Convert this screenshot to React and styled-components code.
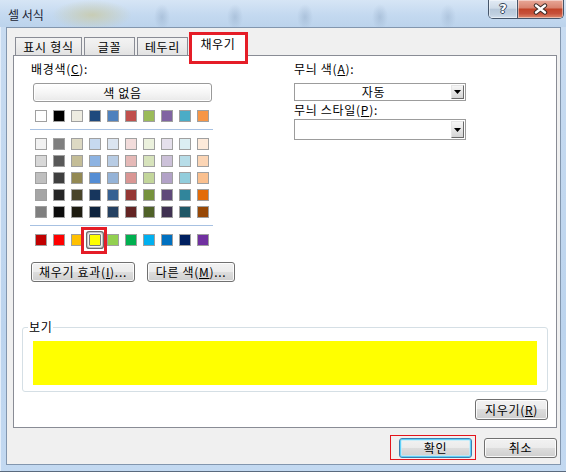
import styled, { createGlobalStyle } from "styled-components";

const UI_FONT = `"Noto Sans CJK KR", "Noto Sans", sans-serif`;

const GlobalStyle = createGlobalStyle`
  html, body { margin: 0; padding: 0; background: #ffffff; }
  body {
    font-family: ${UI_FONT};
    font-size: 12px;
    color: #000;
  }
  *, *::before, *::after { box-sizing: border-box; }
  u { text-underline-offset: 1px; }
`;

const THEME = ["#FFFFFF", "#000000", "#EEECE1", "#1F497D", "#4F81BD", "#C0504D", "#9BBB59", "#8064A2", "#4BACC6", "#F79646"];

const TINTS = [
  ["#F2F2F2", "#7F7F7F", "#DDD9C3", "#C6D9F0", "#DBE5F1", "#F2DCDB", "#EBF1DD", "#E5E0EC", "#DBEEF3", "#FDEADA"],
  ["#D8D8D8", "#595959", "#C4BD97", "#8DB3E2", "#B8CCE4", "#E5B9B7", "#D7E3BC", "#CCC1D9", "#B7DDE8", "#FBD5B5"],
  ["#BFBFBF", "#3F3F3F", "#938953", "#548DD4", "#95B3D7", "#D99694", "#C3D69B", "#B2A2C7", "#92CDDC", "#FAC08F"],
  ["#A5A5A5", "#262626", "#494429", "#17365D", "#366092", "#953734", "#76923C", "#5F497A", "#31859B", "#E36C09"],
  ["#7F7F7F", "#0C0C0C", "#1D1B10", "#0F243E", "#244061", "#632423", "#4F6128", "#3F3151", "#205867", "#974806"],
];

const STANDARD = ["#C00000", "#FF0000", "#FFC000", "#FFFF00", "#92D050", "#00B050", "#00B0F0", "#0070C0", "#002060", "#7030A0"];

const Window = styled.div`
  width: 566px;
  height: 472px;
  display: flex;
  flex-direction: column;
  overflow: hidden;
  background: linear-gradient(180deg, #c9dcf1 0%, #bcd4ee 70%, #c3d9f1 100%);
  box-shadow: inset 0 -1px 0 #5a6a7e, inset 1px 0 0 #e4eefa;
`;

const TitleBar = styled.div`
  height: 27px;
  flex: none;
  display: flex;
  align-items: flex-start;
  background:
    radial-gradient(ellipse 40px 15px at 92px 15px, rgba(200, 204, 178, 0.95) 0%, rgba(200, 204, 178, 0) 100%),
    radial-gradient(ellipse 8px 13px at 162px 17px, rgba(120, 145, 175, 0.3) 0%, rgba(120, 145, 175, 0) 100%),
    radial-gradient(ellipse 8px 13px at 235px 17px, rgba(120, 145, 175, 0.3) 0%, rgba(120, 145, 175, 0) 100%),
    radial-gradient(ellipse 8px 13px at 305px 17px, rgba(120, 145, 175, 0.3) 0%, rgba(120, 145, 175, 0) 100%),
    radial-gradient(ellipse 8px 13px at 380px 17px, rgba(120, 145, 175, 0.3) 0%, rgba(120, 145, 175, 0) 100%),
    radial-gradient(ellipse 8px 13px at 448px 17px, rgba(120, 145, 175, 0.25) 0%, rgba(120, 145, 175, 0) 100%),
    linear-gradient(180deg, #d6e5f5 0%, #c4d9f0 55%, #bcd3ec 100%);
`;

const Title = styled.div`
  margin: 8px 0 0 8px;
  font-size: 12px;
  line-height: 14px;
  color: #1b2433;
`;

const CaptionButtons = styled.div`
  margin-left: auto;
  margin-right: 2px;
  height: 19px;
  display: flex;
  border: 1px solid #46566b;
  border-top: none;
  border-radius: 0 0 5px 5px;
  overflow: hidden;
`;

const CaptionButton = styled.div`
  width: ${(p) => p.$w}px;
  display: flex;
  align-items: center;
  justify-content: center;
  border-left: ${(p) => (p.$divider ? "1px solid #46566b" : "none")};
  background: ${(p) =>
    p.$close
      ? "linear-gradient(180deg, #e8a898 0%, #d98571 42%, #c2452a 52%, #c6503a 75%, #de8a6c 100%)"
      : "linear-gradient(180deg, #e2ebf5 0%, #cfdbe8 45%, #b7c8da 52%, #bfcfe0 80%, #d3e0ee 100%)"};
  box-shadow: inset 0 0 0 1px rgba(255, 255, 255, 0.45);
`;

const HelpGlyph = styled.span`
  font-family: "DejaVu Sans", sans-serif;
  font-weight: bold;
  font-size: 13px;
  line-height: 1;
  color: #ffffff;
  text-shadow: 1px 0 #34465a, -1px 0 #34465a, 0 1px #34465a, 0 -1px #34465a;
  margin-top: -1px;
`;

const Body = styled.div`
  flex: 1;
  min-height: 0;
  display: flex;
  padding: 0 5px 7px 6px;
`;

const Client = styled.div`
  flex: 1;
  display: flex;
  flex-direction: column;
  border: 1px solid #8296ae;
  background: #f0f0f0;
  padding: 6px 3px 0 6px;
  letter-spacing: 0.7px;
`;

const TabRow = styled.div`
  height: 21px;
  display: flex;
  align-items: flex-end;
  gap: 2px;
  padding-left: 2px;
`;

const Tab = styled.div`
  position: relative;
  width: ${(p) => p.$w}px;
  height: ${(p) => (p.$active ? 22 : 18)}px;
  margin-bottom: ${(p) => (p.$active ? -1 : 0)}px;
  z-index: ${(p) => (p.$active ? 1 : 0)};
  display: flex;
  align-items: center;
  justify-content: center;
  padding-bottom: ${(p) => (p.$active ? 3 : 0)}px;
  border: 1px solid #898c95;
  border-bottom: none;
  background: ${(p) =>
    p.$active ? "#ffffff" : "linear-gradient(180deg, #f3f3f3 0%, #ececec 50%, #e2e2e2 100%)"};
  font-size: 12px;
  line-height: 14px;

  &::after {
    content: "";
    display: ${(p) => (p.$marked ? "block" : "none")};
    position: absolute;
    top: -3px;
    left: -2px;
    right: -3px;
    bottom: -8px;
    border: 3px solid #e51d27;
  }
`;

const Panel = styled.div`
  height: 373px;
  flex: none;
  display: flex;
  flex-direction: column;
  border: 1px solid #898c95;
  background: #ffffff;
  padding-top: 6px;
`;

const TopGrid = styled.div`
  display: grid;
  grid-template-columns: 184px 173px;
  column-gap: 79px;
  margin-left: 16px;
  align-items: start;
`;

const Column = styled.div`
  display: flex;
  flex-direction: column;
  align-items: flex-start;
`;

const Label = styled.div`
  margin: ${(p) => p.$mt || 0}px 0 0 1px;
  font-size: 12px;
  line-height: 14px;
  white-space: nowrap;
`;

const PushButton = styled.button`
  position: relative;
  width: ${(p) => p.$w}px;
  height: ${(p) => p.$h || 20}px;
  margin: 0;
  padding: 0;
  font-family: ${UI_FONT};
  font-size: 12px;
  line-height: 14px;
  letter-spacing: 0.7px;
  color: #000;
  border: 1px solid ${(p) => (p.$default ? "#3c7fb1" : "#707070")};
  border-radius: 3px;
  background: linear-gradient(180deg, #f2f2f2 0%, #ebebeb 49%, #dddddd 50%, #cfcfcf 100%);
  box-shadow: ${(p) =>
    p.$default
      ? "inset 0 0 0 1px #5fd0f8, inset 0 0 0 2px rgba(190, 236, 252, 0.7)"
      : "inset 0 0 0 1px rgba(255, 255, 255, 0.85)"};

  &::after {
    content: "";
    display: ${(p) => (p.$marked ? "block" : "none")};
    position: absolute;
    top: -4px;
    left: -10px;
    right: -5px;
    bottom: -3px;
    border: 1px solid #e3141c;
  }
`;

const NoColorButton = styled.button`
  width: 179px;
  height: 19px;
  margin: 7px 0 0 3px;
  padding: 0;
  font-family: ${UI_FONT};
  font-size: 12px;
  line-height: 14px;
  letter-spacing: 0.7px;
  color: #000;
  border: 1px solid #9a9a9a;
  border-radius: 3px;
  background: linear-gradient(180deg, #ffffff 0%, #f6f6f6 50%, #e9e9e9 100%);
  box-shadow: inset 0 0 0 1px #ffffff;
`;

const Palette = styled.div`
  margin-top: 8px;
  display: flex;
  flex-direction: column;
`;

const SwatchRow = styled.div`
  display: flex;
  gap: 6px;
  padding-left: 5px;
`;

const TintBlock = styled.div`
  display: flex;
  flex-direction: column;
  gap: 5px;
`;

const Separator = styled.div`
  width: 183px;
  height: 1px;
  margin: 7px 0 8px;
  background: #a7c1e2;
`;

const Swatch = styled.span`
  position: relative;
  flex: none;
  width: 12px;
  height: 12px;
  border: 1px solid ${(p) => (p.$selected ? "#7a7a7a" : "#a0a0a0")};
  background: ${(p) => p.$color};
  box-shadow: ${(p) =>
    p.$selected ? "0 0 0 1px #f4f4f4, 0 0 0 2px #c4c4c4, 0 0 0 3px #6c6c6c" : "none"};
  border-radius: ${(p) => (p.$selected ? 1 : 0)}px;

  &::after {
    content: "";
    display: ${(p) => (p.$selected ? "block" : "none")};
    position: absolute;
    top: -8px;
    left: -9px;
    right: -7px;
    bottom: -9px;
    border: 3px solid #e51d27;
  }
`;

const ButtonRow = styled.div`
  display: flex;
  gap: ${(p) => p.$gap || 12}px;
  margin: ${(p) => p.$m || "0"};
  justify-content: ${(p) => p.$justify || "flex-start"};
  width: ${(p) => (p.$width ? `${p.$width}px` : "auto")};
`;

const Combo = styled.div`
  width: 172px;
  height: ${(p) => p.$h}px;
  margin: ${(p) => p.$mt}px 0 0 1px;
  display: flex;
  padding: 1px;
  border: 1px solid #9c9c9c;
  background: #ffffff;
`;

const ComboValue = styled.span`
  flex: 1;
  display: flex;
  align-items: center;
  justify-content: center;
  font-size: 12px;
  line-height: 14px;
`;

const ComboArrow = styled.span`
  width: 13px;
  flex: none;
  display: flex;
  align-items: center;
  justify-content: center;
  border: 1px solid;
  border-color: #e6e6e6 #6a6a6a #6a6a6a #e6e6e6;
  background: linear-gradient(180deg, #f6f6f6 0%, #e4e4e4 55%, #d4d4d4 100%);
`;

const Preview = styled.fieldset`
  margin: 38px 0 0 8px;
  width: 526px;
  padding: 7px 10px 6px;
  border: 1px solid #d5dfe5;
  border-radius: 3px;
  min-inline-size: 0;
`;

const PreviewLegend = styled.legend`
  margin-left: -5px;
  padding: 0 1px;
  font-size: 12px;
  line-height: 14px;
`;

const PreviewFill = styled.div`
  height: 44px;
  background: ${(p) => p.$color};
`;

const DialogButtons = styled.div`
  margin-top: 10px;
  display: flex;
  justify-content: flex-end;
  gap: 12px;
`;

const Arrow = () => (
  <svg width="7" height="4" viewBox="0 0 7 4">
    <path d="M0 0 H7 L3.5 4 Z" fill="#000" />
  </svg>
);

const CloseGlyph = () => (
  <svg width="15" height="12" viewBox="0 0 15 12">
    <path d="M3 2.5 L12 9.5 M12 2.5 L3 9.5" stroke="#3a2a26" strokeWidth="4.4" strokeLinecap="round" fill="none" />
    <path d="M3 2.5 L12 9.5 M12 2.5 L3 9.5" stroke="#ffffff" strokeWidth="2.4" strokeLinecap="round" fill="none" />
  </svg>
);

const tabs = [
  { label: "표시 형식", w: 67 },
  { label: "글꼴", w: 51 },
  { label: "테두리", w: 51 },
  { label: "채우기", w: 56, active: true },
];

export default function App() {
  const selected = "#FFFF00";
  return (
    <>
      <GlobalStyle />
      <Window>
        <TitleBar>
          <Title>셀 서식</Title>
          <CaptionButtons>
            <CaptionButton $w={28}>
              <HelpGlyph>?</HelpGlyph>
            </CaptionButton>
            <CaptionButton $w={46} $close $divider>
              <CloseGlyph />
            </CaptionButton>
          </CaptionButtons>
        </TitleBar>
        <Body>
          <Client>
            <TabRow>
              {tabs.map((t) => (
                <Tab key={t.label} $w={t.w} $active={t.active} $marked={t.active}>
                  {t.label}
                </Tab>
              ))}
            </TabRow>
            <Panel>
              <TopGrid>
                <Column>
                  <Label>
                    배경색(<u>C</u>):
                  </Label>
                  <NoColorButton>색 없음</NoColorButton>
                  <Palette>
                    <SwatchRow>
                      {THEME.map((c) => (
                        <Swatch key={c} $color={c} />
                      ))}
                    </SwatchRow>
                    <Separator />
                    <TintBlock>
                      {TINTS.map((row, i) => (
                        <SwatchRow key={i}>
                          {row.map((c, j) => (
                            <Swatch key={j} $color={c} />
                          ))}
                        </SwatchRow>
                      ))}
                    </TintBlock>
                    <Separator />
                    <SwatchRow>
                      {STANDARD.map((c) => (
                        <Swatch key={c} $color={c} $selected={c === selected} />
                      ))}
                    </SwatchRow>
                  </Palette>
                  <ButtonRow $m="16px 0 0 1px">
                    <PushButton $w={104}>
                      채우기 효과(<u>I</u>)...
                    </PushButton>
                    <PushButton $w={88}>
                      다른 색(<u>M</u>)...
                    </PushButton>
                  </ButtonRow>
                </Column>
                <Column>
                  <Label>
                    무늬 색(<u>A</u>):
                  </Label>
                  <Combo $h={18} $mt={7}>
                    <ComboValue>자동</ComboValue>
                    <ComboArrow>
                      <Arrow />
                    </ComboArrow>
                  </Combo>
                  <Label $mt={2}>
                    무늬 스타일(<u>P</u>):
                  </Label>
                  <Combo $h={21} $mt={2}>
                    <ComboValue />
                    <ComboArrow>
                      <Arrow />
                    </ComboArrow>
                  </Combo>
                </Column>
              </TopGrid>
              <Preview>
                <PreviewLegend>보기</PreviewLegend>
                <PreviewFill $color={selected} />
              </Preview>
              <ButtonRow $m="7px 0 0 8px" $width={526} $justify="flex-end">
                <PushButton $w={73} $h={21}>
                  지우기(<u>R</u>)
                </PushButton>
              </ButtonRow>
            </Panel>
            <DialogButtons>
              <PushButton $w={73} $default $marked>
                확인
              </PushButton>
              <PushButton $w={73}>취소</PushButton>
            </DialogButtons>
          </Client>
        </Body>
      </Window>
    </>
  );
}
